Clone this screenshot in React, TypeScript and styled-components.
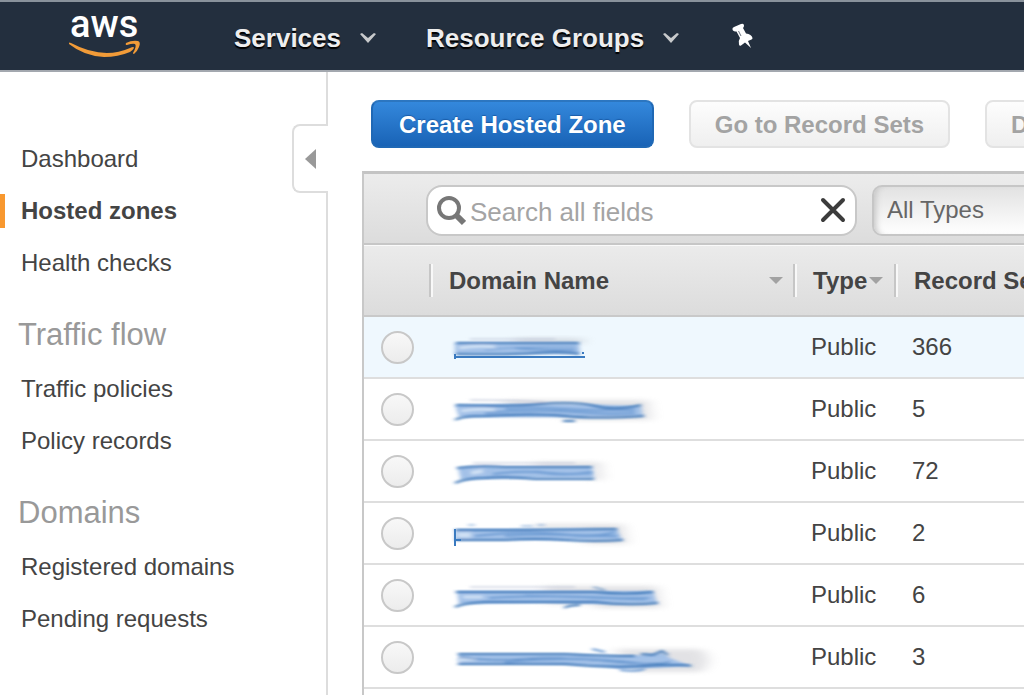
import React from "react";
import styled, { createGlobalStyle, css } from "styled-components";

const GlobalStyle = createGlobalStyle`
  *, *::before, *::after { box-sizing: border-box; }
  body {
    margin: 0;
    background: #fff;
    color: #444;
    font-family: "Liberation Sans", Arial, Helvetica, sans-serif;
    font-size: 24px;
    line-height: 32px;
    overflow: hidden;
  }
  button, input, select { font: inherit; color: inherit; margin: 0; }
`;

const Page = styled.div`
  display: flex;
  flex-direction: column;
  height: 100vh;
  overflow: hidden;
`;

const TopBar = styled.header`
  display: flex;
  flex: none;
  align-items: center;
  height: 72px;
  padding-left: 68px;
  background: #232f3e;
  border-top: 2px solid #89929b;
  border-bottom: 2px solid #a3a8af;
`;

const LogoLink = styled.a`
  display: flex;
  width: 166px;
  height: 68px;
`;

const MenuButton = styled.button`
  display: flex;
  align-items: center;
  gap: 19px;
  margin-right: 50px;
  padding: 4px 0 0;
  border: 0;
  background: none;
  color: #eee;
  font-size: 26px;
  font-weight: bold;
  white-space: nowrap;
  text-shadow: 0 2px 1px #000;
`;

const IconButton = styled.button`
  display: flex;
  padding: 0 0 2px;
  border: 0;
  background: none;
`;

const Body = styled.div`
  display: flex;
  flex: 1;
  min-height: 0;
`;

const SideNav = styled.nav`
  flex: none;
  width: 292px;
  padding-top: 61px;
`;

const NavHeading = styled.h2`
  margin: 0;
  padding: 30px 0 12px 18px;
  color: #999;
  font-size: 31px;
  font-weight: normal;
  line-height: 32px;
`;

const NavList = styled.ul`
  margin: 0;
  padding: 0;
  list-style: none;
`;

const NavItem = styled.li`
  padding: 9px 0;
`;

const NavLink = styled.a<{ $active?: boolean }>`
  display: block;
  padding-left: 16px;
  border-left: 5px solid ${(p) => (p.$active ? "#f8982f" : "transparent")};
  color: #444;
  font-weight: ${(p) => (p.$active ? "bold" : "normal")};
  line-height: 34px;
  text-decoration: none;
`;

const Divider = styled.div`
  display: flex;
  flex: none;
  flex-direction: column;
  width: 36px;
`;

const DividerLine = styled.div<{ $height?: number }>`
  ${(p) => (p.$height ? css`height: ${p.$height}px;` : css`flex: 1;`)}
  border-right: 2px solid #ddd;
`;

const CollapseButton = styled.button`
  display: flex;
  align-items: center;
  height: 69px;
  padding: 0 0 0 11px;
  border: 2px solid #ddd;
  border-right: 0;
  border-radius: 8px 0 0 8px;
  background: #fff;
`;

const Main = styled.main`
  display: flex;
  flex: 1;
  flex-direction: column;
  min-width: 0;
  padding-left: 34px;
  overflow: hidden;
`;

const Actions = styled.div`
  display: flex;
  flex: none;
  gap: 35px;
  padding: 28px 0 23px 9px;
`;

const ActionButton = styled.button<{ $primary?: boolean }>`
  flex: none;
  height: 48px;
  border-radius: 8px;
  font-weight: bold;
  white-space: nowrap;
  ${(p) =>
    p.$primary
      ? css`
          padding: 2px 26px 0;
          border: 2px solid #1f68b5;
          border-top-color: #2c76c0;
          background: linear-gradient(#3488dc, #1963b6);
          color: #fff;
          text-shadow: 0 -1px 1px #1a5ca8;
        `
      : css`
          padding: 2px 24px 0;
          border: 2px solid #e3e3e3;
          background: linear-gradient(#fdfdfd, #efefef);
          color: #a3a3a3;
        `}
`;

const Panel = styled.section`
  flex: 1;
  border-top: 3px solid #c4c4c4;
  border-left: 2px solid #c8c8c8;
`;

const FilterBar = styled.div`
  display: flex;
  gap: 15px;
  height: 71px;
  padding: 11px 0 0 62px;
  border-bottom: 2px solid #c6c6c6;
  background: linear-gradient(#ececec, #dcdcdc);
`;

const SearchBox = styled.div`
  display: flex;
  flex: none;
  align-items: center;
  width: 431px;
  height: 51px;
  padding: 0 9px 0 8px;
  border: 2px solid #c8c8c8;
  border-radius: 16px;
  background: #fff;
`;

const SearchInput = styled.input`
  flex: 1;
  min-width: 0;
  padding: 2px 0 0 4px;
  border: 0;
  outline: 0;
  background: none;
  font-size: 26px;
  &::placeholder { color: #a4a4a4; opacity: 1; }
`;

const TypeSelect = styled.select`
  flex: none;
  width: 260px;
  height: 51px;
  padding: 0 13px 2px;
  appearance: none;
  border: 2px solid #c6c6c6;
  border-radius: 10px;
  background: linear-gradient(#e2e2e2, #fff);
  box-shadow: inset 6px 0 6px -4px #c4c4c4;
  color: #666;
`;

const ZoneTable = styled.table`
  width: 100%;
  min-width: 860px;
  table-layout: fixed;
  border-collapse: separate;
  border-spacing: 0;
`;

const HeadCell = styled.th<{ $width?: number }>`
  width: ${(p) => (p.$width ? `${p.$width}px` : "auto")};
  height: 72px;
  padding: 0;
  border-top: 1px solid #fafafa;
  border-bottom: 2px solid #c9c9c9;
  background: linear-gradient(#ebebeb, #dcdcdc);
  text-align: left;
`;

const HeadLabel = styled.div`
  display: flex;
  align-items: center;
  gap: 2px;
  height: 33px;
  padding: 0 10px 0 18px;
  border-left: 2px solid #c6c6c6;
  box-shadow: inset 2px 0 0 #f8f8f8;
  white-space: nowrap;
`;

const SortArrow = styled.span<{ $end?: boolean }>`
  flex: none;
  margin-left: ${(p) => (p.$end ? "auto" : "0")};
  border: 7px solid transparent;
  border-top-color: #a2a2a2;
  border-bottom: 0;
`;

const Row = styled.tr<{ $highlight?: boolean }>`
  background: ${(p) => (p.$highlight ? "#eff8fe" : "#fff")};
`;

const Cell = styled.td<{ $pick?: boolean }>`
  height: 62px;
  padding: 0 0 0 ${(p) => (p.$pick ? 17 : 18)}px;
  border-bottom: 2px solid #dedede;
  line-height: 0;
`;

const Radio = styled.input`
  width: 33px;
  height: 33px;
  appearance: none;
  border: 2px solid #c8c8c8;
  border-radius: 50%;
  background: linear-gradient(#f8f8f8, #ececec);
`;

const ZoneLink = styled.a`
  display: inline-block;
  vertical-align: middle;
`;

type Stroke = [d: string, color: string, width: number];

type Zone = {
  type: string;
  records: number;
  body: string;
  haze: string;
  strokes: Stroke[];
  crisp?: string;
};

const DARK = "#3d77b8";
const MID = "#6f9dd4";
const PALE = "#cfe0f4";
const GREY = "#b9c0d4";

const zones: Zone[] = [
  {
    type: "Public",
    records: 366,
    body: "M10 15H134L135 26H10Z",
    haze: "M70 10H138V16H70Z",
    crisp: "M10 26V31M10 29H140M137 25H139",
    strokes: [
      ["M25 11H110", GREY, 1],
      ["M11 15H134", DARK, 2],
      ["M14 20Q34 17 50 19", PALE, 3],
      ["M40 22Q80 18 130 19", MID, 1],
      ["M70 20Q90 22 130 22", MID, 2],
      ["M11 26Q60 27 90 25T134 26", DARK, 2],
    ],
  },
  {
    type: "Public",
    records: 5,
    body: "M10 15Q100 12 196 16L198 26Q100 28 14 27Z",
    haze: "M60 10H203L206 30H120V26H60Z",
    strokes: [
      ["M25 10Q70 10 100 12", GREY, 1],
      ["M11 15Q60 17 95 14T150 16T196 15", DARK, 2],
      ["M16 21Q34 18 50 20", PALE, 3],
      ["M60 19Q90 17 120 19T190 20", MID, 2],
      ["M40 23Q90 19 130 22T190 23", MID, 2],
      ["M10 30Q16 26 40 26Q90 23 120 26T199 26", DARK, 2],
      ["M118 31H130", DARK, 2],
    ],
  },
  {
    type: "Public",
    records: 72,
    body: "M13 16Q30 13 60 15H147L149 26Q90 26 40 27L16 28Z",
    haze: "M90 10H155L157 28H145V15H90Z",
    strokes: [
      ["M28 11H130", GREY, 1],
      ["M12 16Q34 13 60 15H147", DARK, 2],
      ["M26 21L38 19", PALE, 4],
      ["M48 22Q80 18 100 21T147 20", MID, 2],
      ["M90 19Q110 22 147 22", MID, 1],
      ["M10 31Q22 26 40 26Q60 24 90 27H149", DARK, 2],
    ],
  },
  {
    type: "Public",
    records: 2,
    body: "M10 15H172L177 26H10Z",
    haze: "M90 10H178L182 30H140V14H90Z",
    crisp: "M10 15V32M10 26H16",
    strokes: [
      ["M23 11H30M76 12H88M92 11H100", MID, 1],
      ["M11 16H60L172 15", DARK, 2],
      ["M12 21H26", PALE, 5],
      ["M30 22Q80 16 115 20T170 18", MID, 2],
      ["M60 22Q100 19 140 22H172", MID, 2],
      ["M11 26H60Q90 24 120 26T178 26", DARK, 2],
    ],
  },
  {
    type: "Public",
    records: 6,
    body: "M12 15H208L212 27Q150 29 100 27L14 28Z",
    haze: "M100 10H212L216 32H150V28H100Z",
    strokes: [
      ["M25 11H130", GREY, 1],
      ["M148 11L160 14", DARK, 1],
      ["M11 16H150Q180 19 208 16", DARK, 2],
      ["M18 21H38", PALE, 3],
      ["M44 22Q90 19 140 21T204 22", MID, 2],
      ["M80 19Q120 21 200 24", MID, 1],
      ["M10 31Q18 27 40 26H150Q180 30 213 27", DARK, 2],
      ["M119 32Q124 29 135 29", DARK, 2],
    ],
  },
  {
    type: "Public",
    records: 3,
    body: "M14 16H130Q180 20 218 15L225 20L246 28Q210 30 175 31Q140 25 14 26Z",
    haze: "M170 11H256Q270 22 256 34L190 34Z",
    strokes: [
      ["M147 11L160 14", MID, 2],
      ["M13 16H120Q160 18 190 18", DARK, 2],
      ["M196 16L208 17L217 13L223 17", DARK, 2],
      ["M12 22L30 21", PALE, 3],
      ["M14 19Q50 24 80 21T160 23T225 24", DARK, 1],
      ["M60 24Q130 17 200 26", MID, 2],
      ["M13 26H120Q160 30 200 28T246 28", DARK, 2],
      ["M175 32Q190 34 200 31", MID, 2],
    ],
  },
];

const Smudge = ({ zone }: { zone: Zone }) => (
  <svg width="280" height="44" viewBox="2 -3 280 44" aria-hidden="true">
    <path d={zone.haze} fill="#9b9ba4" opacity="0.28" filter="url(#haze)" />
    <path d={zone.body} fill="#a3c1e8" filter="url(#soft)" />
    <g filter="url(#soft)" fill="none">
      {zone.strokes.map(([d, color, width]) => (
        <path key={d} d={d} stroke={color} strokeWidth={width} />
      ))}
    </g>
    {zone.crisp && <path d={zone.crisp} fill="none" stroke="#3a7ac0" strokeWidth="2" />}
  </svg>
);

const Filters = () => (
  <svg width="0" height="0" aria-hidden="true" display="block">
    <filter id="soft" x="-10%" y="-50%" width="120%" height="200%">
      <feGaussianBlur stdDeviation="2 0.9" />
    </filter>
    <filter id="haze" x="-20%" y="-50%" width="140%" height="200%">
      <feGaussianBlur stdDeviation="7 2" />
    </filter>
  </svg>
);

const Logo = () => (
  <svg width="76" height="68" viewBox="0 0 76 68" role="img" aria-label="aws">
    <text x="2" y="35" fill="#fff" fontFamily="Roboto, sans-serif" fontSize="38" fontWeight="500">
      aws
    </text>
    <path d="M1 41Q1 40 3 41Q35 58 62 46Q66 44 66 46Q65 48 62 50Q50 55 36 55Q16 54 1 42Z" fill="#f19b38" />
    <path d="M58 41Q64 38 70 39Q73 40 71 45Q69 50 66 52Q65 52 65 51Q69 44 67 42Q65 41 59 43Q57 43 58 41Z" fill="#f19b38" />
  </svg>
);

const Chevron = () => (
  <svg width="16" height="10" viewBox="0 0 16 10" aria-hidden="true">
    <path d="M0 1L2 0L8 5L14 0L16 1L8 10Z" fill="#c8cacc" />
  </svg>
);

const PinIcon = () => (
  <svg width="26" height="28" viewBox="-3 -2 26 28" aria-hidden="true">
    <path
      d="M0.5 6.5Q0 4.5 2 4L9 1Q12 0 12 2.5Q12 4 11 5L14 10.5Q19.5 11 20.5 15Q20.5 16 19.5 16.5L16 18L19 25L13 19.5L9 22.5Q7.5 23.5 7 21.5Q6 18 8 15L4.5 8.5Q1 8.5 0.5 6.5Z"
      fill="#fff"
    />
    <path d="M6.500 8L9 13" stroke="#6b7480" strokeWidth="1" />
  </svg>
);

const SearchIcon = () => (
  <svg width="30" height="32" viewBox="0 0 30 32" aria-hidden="true">
    <circle cx="13" cy="13" r="10" fill="none" stroke="#777" strokeWidth="4" />
    <path d="M20 20L28 28" stroke="#777" strokeWidth="6" />
  </svg>
);

const ClearIcon = () => (
  <svg width="26" height="26" viewBox="0 0 26 26" aria-hidden="true">
    <path d="M3 3L23 23M23 3L3 23" stroke="#3c3c3c" strokeWidth="4" strokeLinecap="round" />
  </svg>
);

const navGroups = [
  { heading: "", items: ["Dashboard", "Hosted zones", "Health checks"] },
  { heading: "Traffic flow", items: ["Traffic policies", "Policy records"] },
  { heading: "Domains", items: ["Registered domains", "Pending requests"] },
];

export default function App() {
  return (
    <Page>
      <GlobalStyle />
      <Filters />
      <TopBar>
        <LogoLink href="#">
          <Logo />
        </LogoLink>
        <MenuButton type="button">
          Services
          <Chevron />
        </MenuButton>
        <MenuButton type="button">
          Resource Groups
          <Chevron />
        </MenuButton>
        <IconButton type="button" aria-label="Pin shortcuts">
          <PinIcon />
        </IconButton>
      </TopBar>
      <Body>
        <SideNav>
          {navGroups.map((group) => (
            <React.Fragment key={group.heading}>
              {group.heading && <NavHeading>{group.heading}</NavHeading>}
              <NavList>
                {group.items.map((item) => (
                  <NavItem key={item}>
                    <NavLink href="#" $active={item === "Hosted zones"}>
                      {item}
                    </NavLink>
                  </NavItem>
                ))}
              </NavList>
            </React.Fragment>
          ))}
        </SideNav>
        <Divider>
          <DividerLine $height={52} />
          <CollapseButton type="button" aria-label="Collapse navigation">
            <svg width="12" height="20" viewBox="0 0 12 20" aria-hidden="true">
              <path d="M0 10L11 0V20Z" fill="#999" />
            </svg>
          </CollapseButton>
          <DividerLine />
        </Divider>
        <Main>
          <Actions>
            <ActionButton type="button" $primary>Create Hosted Zone</ActionButton>
            <ActionButton type="button" disabled>Go to Record Sets</ActionButton>
            <ActionButton type="button" disabled>Delete Hosted Zone</ActionButton>
          </Actions>
          <Panel>
            <FilterBar>
              <SearchBox>
                <SearchIcon />
                <SearchInput type="text" placeholder="Search all fields" aria-label="Search all fields" />
                <IconButton type="button" aria-label="Clear search">
                  <ClearIcon />
                </IconButton>
              </SearchBox>
              <TypeSelect aria-label="Zone type">
                <option>All Types</option>
              </TypeSelect>
            </FilterBar>
            <ZoneTable>
              <thead>
                <tr>
                  <HeadCell $width={65} aria-label="Select" />
                  <HeadCell $width={364}>
                    <HeadLabel>Domain Name<SortArrow $end /></HeadLabel>
                  </HeadCell>
                  <HeadCell $width={101}>
                    <HeadLabel>Type<SortArrow /></HeadLabel>
                  </HeadCell>
                  <HeadCell>
                    <HeadLabel>Record Set Count</HeadLabel>
                  </HeadCell>
                </tr>
              </thead>
              <tbody>
                {zones.map((zone, i) => (
                  <Row key={zone.records} $highlight={i === 0}>
                    <Cell $pick>
                      <Radio type="radio" name="zone" aria-label={`Select zone ${i + 1}`} />
                    </Cell>
                    <Cell>
                      <ZoneLink href="#" aria-label={`Zone ${i + 1}`}>
                        <Smudge zone={zone} />
                      </ZoneLink>
                    </Cell>
                    <Cell>{zone.type}</Cell>
                    <Cell>{zone.records}</Cell>
                  </Row>
                ))}
              </tbody>
            </ZoneTable>
          </Panel>
        </Main>
      </Body>
    </Page>
  );
}
